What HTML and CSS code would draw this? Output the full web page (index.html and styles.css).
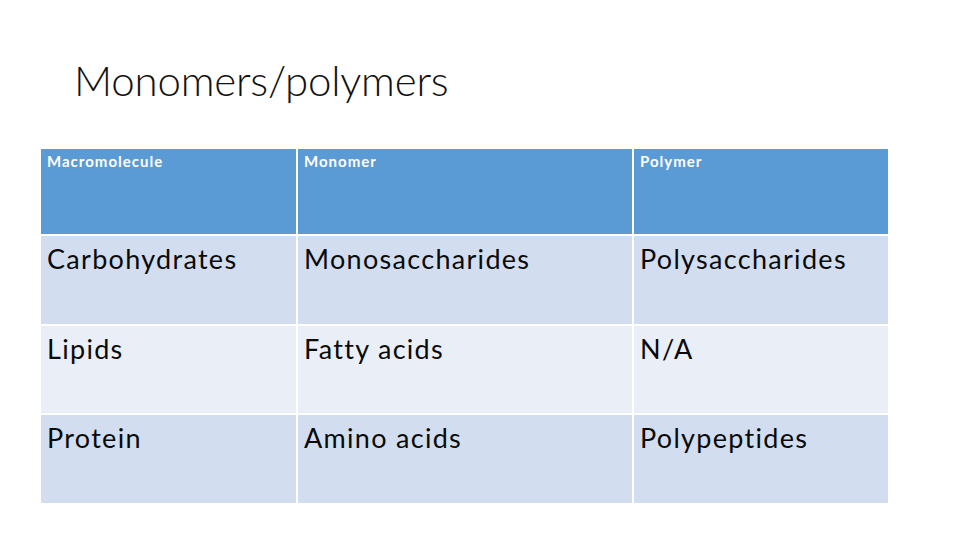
FILE: index.html
```html
<!DOCTYPE html>
<html>
<head>
<meta charset="utf-8">
<link rel="stylesheet" href="styles.css">
</head>
<body>
<div class="slide">
  <h1 class="title">Monomers/polymers</h1>
  <table class="grid">
    <colgroup>
      <col class="c1"><col class="c2"><col class="c3">
    </colgroup>
    <thead>
      <tr class="head">
        <th>Macromolecule</th><th>Monomer</th><th>Polymer</th>
      </tr>
    </thead>
    <tbody>
      <tr class="band1"><td>Carbohydrates</td><td>Monosaccharides</td><td>Polysaccharides</td></tr>
      <tr class="band2"><td>Lipids</td><td>Fatty acids</td><td>N/A</td></tr>
      <tr class="band1"><td>Protein</td><td>Amino acids</td><td>Polypeptides</td></tr>
    </tbody>
  </table>
</div>
</body>
</html>
```
FILE: styles.css
```css
html, body {
  margin: 0;
  padding: 0;
  background: #ffffff;
}
.slide {
  width: 960px;
  height: 540px;
  padding: 0 0 0 39px;
  box-sizing: border-box;
  font-family: Lato, "Open Sans", sans-serif;
  color: #000;
  overflow: hidden;
}
.title {
  margin: 0;
  padding: 57px 0 0 35px;
  height: 88px;
  box-sizing: border-box;
  font-family: Lato, "Open Sans", sans-serif;
  font-weight: 300;
  font-size: 42px;
  line-height: 46px;
  letter-spacing: -0.2px;
  color: #111;
}
.grid {
  border-collapse: collapse;
  table-layout: fixed;
  width: 849px;
  margin-top: 59px;
}
.c1 { width: 257px; }
.c2 { width: 336px; }
.c3 { width: 256px; }
.grid th, .grid td {
  border: 2px solid #ffffff;
  text-align: left;
  vertical-align: top;
  padding: 0 6px;
}
.head th {
  background: #5b9bd5;
  color: #ffffff;
  font-weight: 700;
  font-size: 15px;
  line-height: 18px;
  letter-spacing: 1px;
  height: 87px;
  padding-top: 3px;
  box-sizing: border-box;
}
.grid td {
  font-size: 27px;
  line-height: 32px;
  letter-spacing: 1.3px;
  height: 89.6px;
  padding-top: 7px;
  box-sizing: border-box;
  color: #0a0a0a;
}
.band1 td { background: #d2deef; }
.band2 td { background: #eaeff7; }
```
